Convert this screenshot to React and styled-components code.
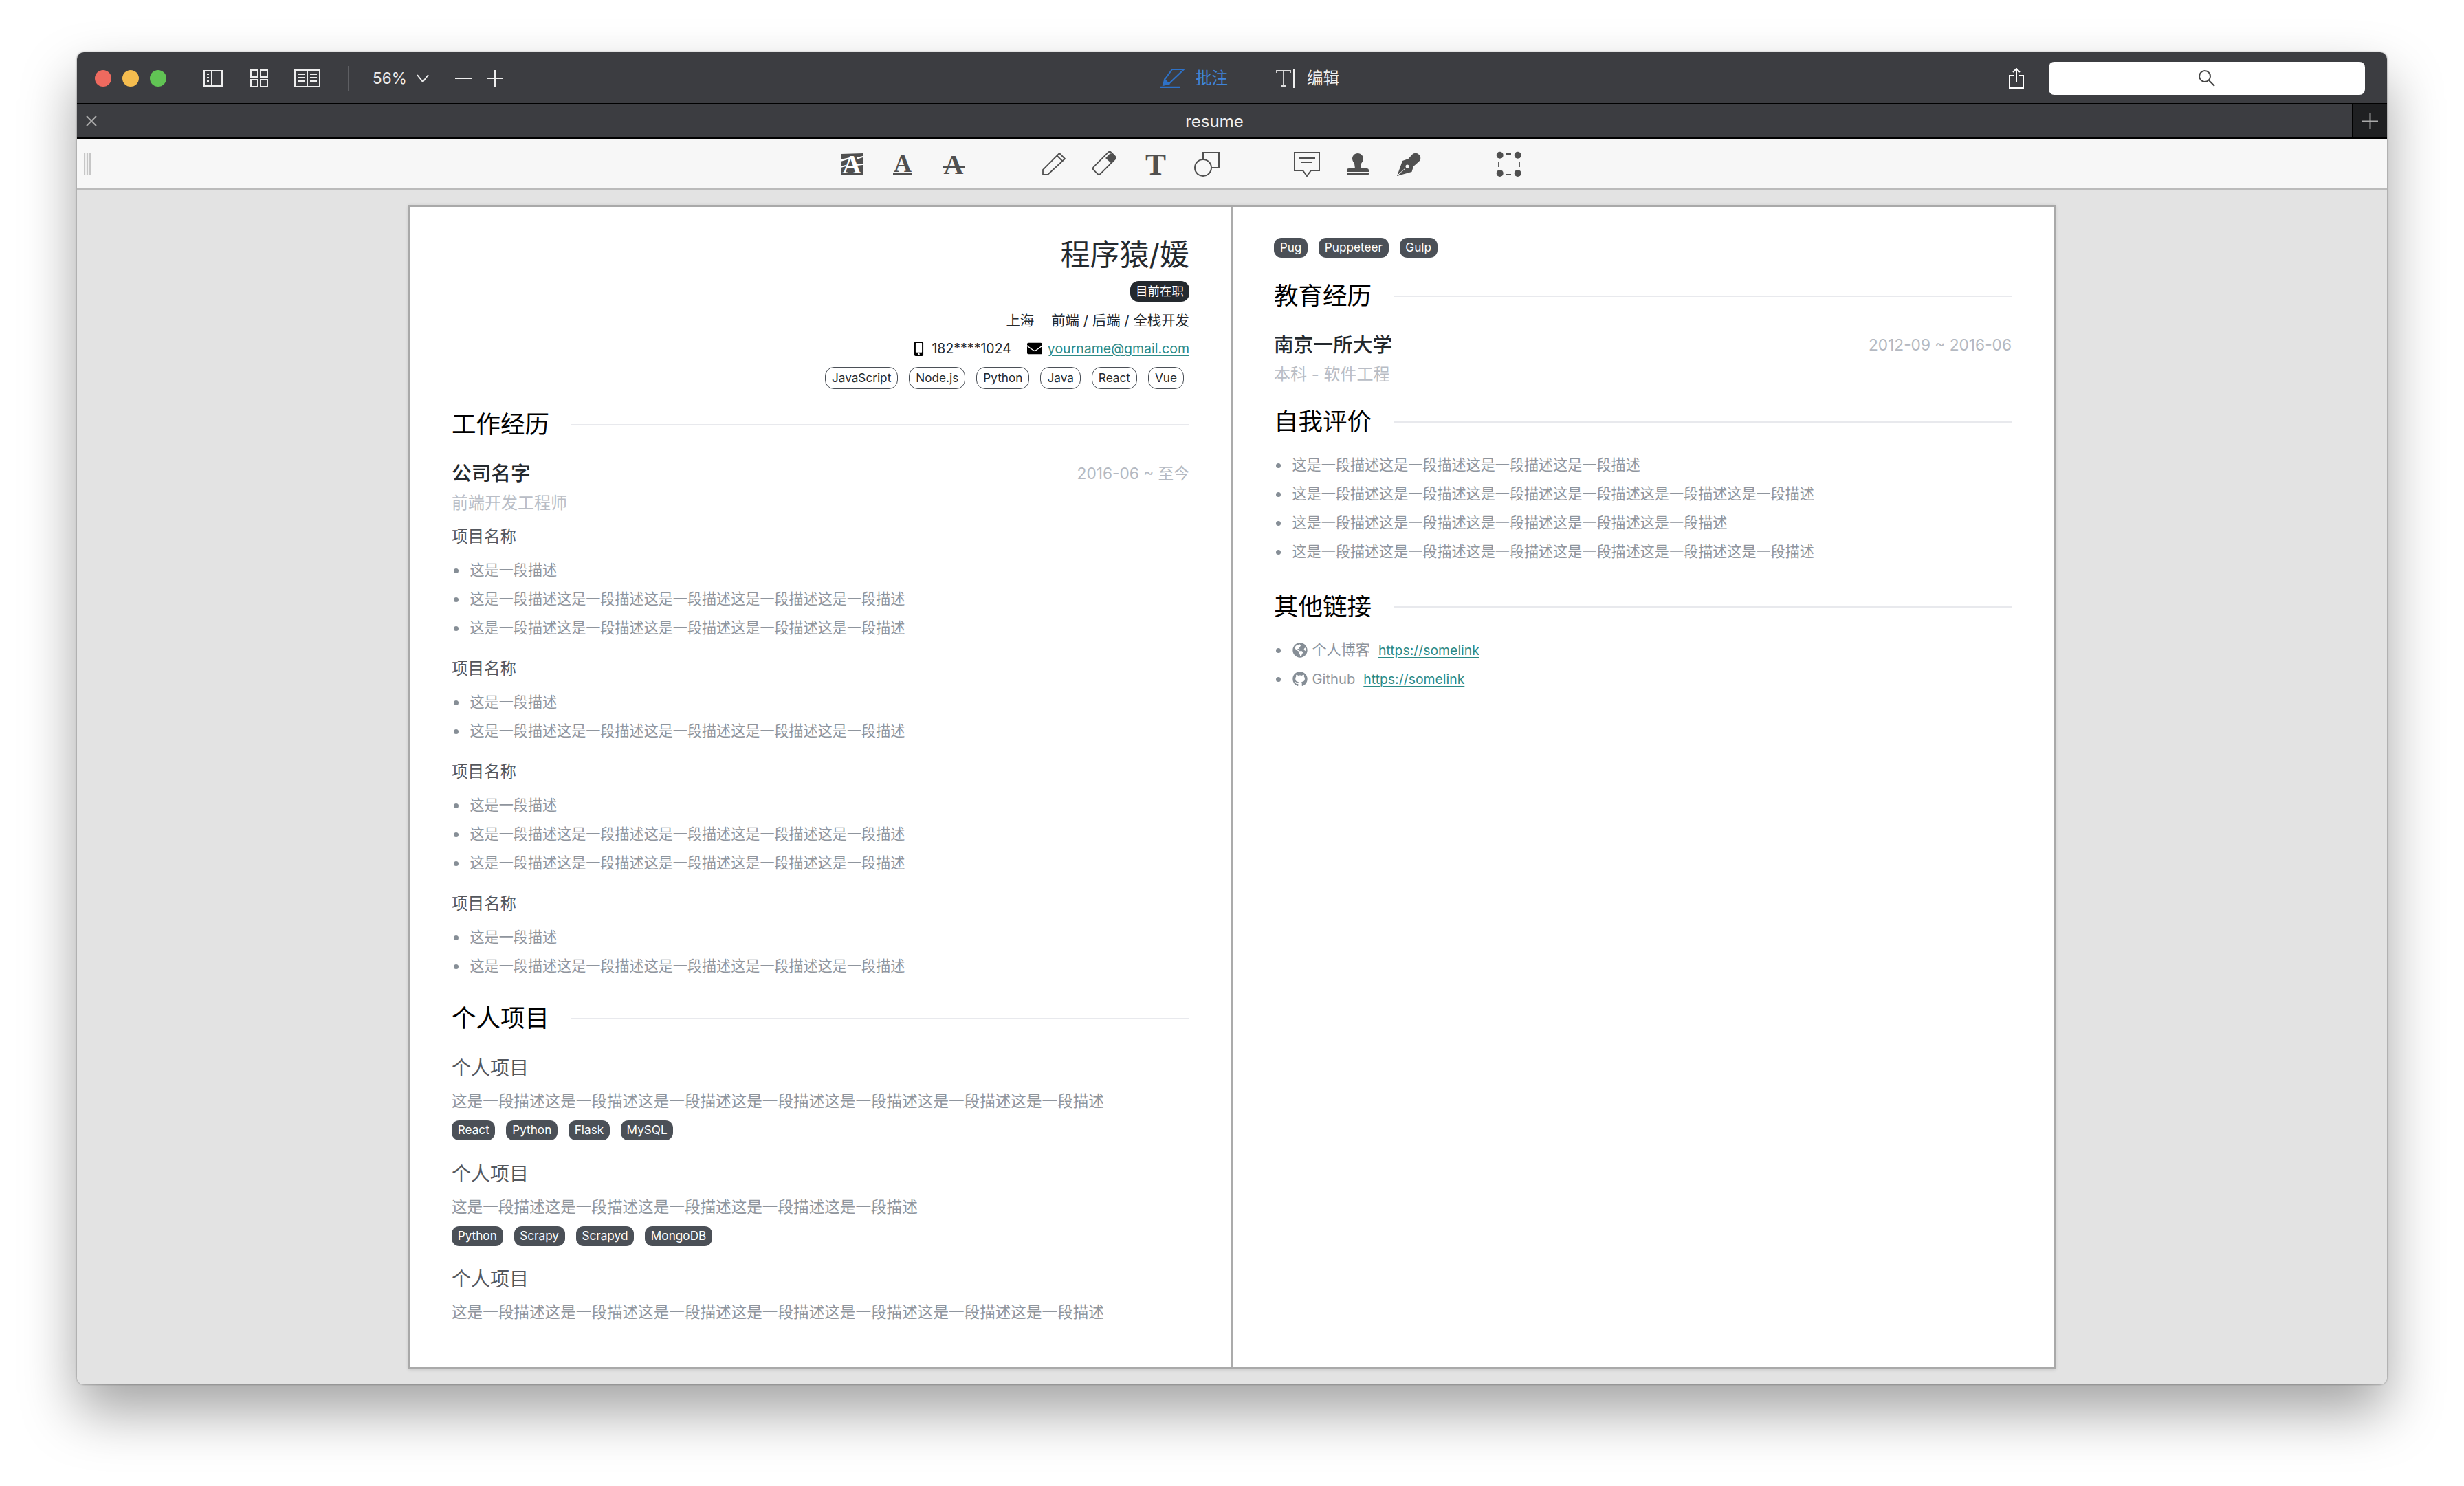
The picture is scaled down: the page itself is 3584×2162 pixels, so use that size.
import React from 'react';
import styled, { createGlobalStyle } from 'styled-components';
import { FaMobileAlt, FaEnvelope, FaGlobeAmericas, FaGithub } from 'react-icons/fa';

const GlobalStyle = createGlobalStyle`
  html, body { margin: 0; padding: 0; background: #fff; }
  body { font-family: Inter, "Noto Sans CJK SC", sans-serif; }
  * { box-sizing: border-box; }
`;

const Stage = styled.div`
  width: 3584px;
  height: 2162px;
  padding: 76px 112px 148px;
  overflow: hidden;
`;

const Window = styled.div`
  height: 1938px;
  border-radius: 10px;
  overflow: hidden;
  display: flex;
  flex-direction: column;
  background: #e3e3e3;
`;

const WindowShadow = styled.div`
  border-radius: 10px;
  box-shadow: 0 40px 80px rgba(0, 0, 0, 0.36), 0 0 3px rgba(0, 0, 0, 0.45);
`;

const TitleBar = styled.div`
  height: 76px;
  flex: none;
  display: flex;
  align-items: center;
  padding-top: 2px;
  background: #3c3d41;
  border-bottom: 2px solid #000;
  color: #eee;
`;

const LeftTools = styled.div`
  width: 1576px;
  flex: none;
  display: flex;
  align-items: center;
  padding-left: 26px;
`;

const Lights = styled.div`
  display: flex;
  gap: 16px;
  margin-right: 54px;
`;

const Light = styled.span`
  width: 24px;
  height: 24px;
  border-radius: 50%;
  background: ${(p) => p.$color};
`;

const BarIcon = styled.svg`
  display: block;
  flex: none;
  margin-left: ${(p) => p.$ml || 0}px;
`;

const BarDivider = styled.span`
  width: 2px;
  height: 36px;
  margin-left: 40px;
  background: #5e5f63;
`;

const Zoom = styled.span`
  margin-left: 34px;
  font-size: 22.5px;
  line-height: 30px;
`;

const ModeLabel = styled.span`
  margin: 0 ${(p) => p.$mr}px 0 ${(p) => p.$ml}px;
  font-size: 23.5px;
  line-height: 30px;
  color: ${(p) => p.$color};
`;

const Spacer = styled.div`
  flex: 1;
`;

const SearchBox = styled.div`
  width: 460px;
  height: 48px;
  margin: 0 32px 0 36px;
  border-radius: 8px;
  background: #fff;
  display: flex;
  align-items: center;
  justify-content: center;
`;

const TabBar = styled.div`
  height: 50px;
  flex: none;
  display: flex;
  align-items: stretch;
  background: #3c3d41;
  border-bottom: 2px solid #000;
`;

const TabClose = styled.div`
  width: 50px;
  display: flex;
  align-items: center;
  justify-content: center;
  padding-right: 8px;
`;

const TabTitle = styled.div`
  flex: 1;
  padding-right: 50px;
  text-align: center;
  font-size: 24px;
  line-height: 50px;
  color: #eee;
`;

const TabAdd = styled.div`
  width: 51px;
  display: flex;
  align-items: center;
  justify-content: center;
  background: #1f2022;
  border-left: 2px solid #000;
`;

const ToolBar = styled.div`
  height: 74px;
  flex: none;
  display: flex;
  align-items: center;
  padding-left: 10px;
  background: #f7f7f7;
  border-bottom: 2px solid #bbb;
`;

const Grip = styled.div`
  width: 10px;
  height: 32px;
  margin-right: 1070px;
  background: repeating-linear-gradient(90deg, #c6c6c6 0 2px, #f0f0f0 2px 4px);
`;

const ToolCell = styled.div`
  width: 74px;
  height: 40px;
  flex: none;
  display: flex;
  align-items: center;
  justify-content: center;
`;

const ToolGap = styled.div`
  width: 72px;
  flex: none;
`;

const ToolSvg = styled.svg`
  display: block;
  overflow: visible;
`;

const Viewer = styled.div`
  flex: 1;
  padding: 22px 0 22px 482px;
`;

const Sheet = styled.div`
  width: 2396px;
  height: 1694px;
  display: flex;
  background: #fff;
  border: 3px solid #a9a9a9;
  box-shadow: 0 1px 5px rgba(0, 0, 0, 0.12);
`;

const LeftPage = styled.div`
  width: 1194px;
  flex: none;
  padding: 39px 61px 0 60px;
`;

const RightPage = styled.div`
  flex: 1;
  padding: 45px 61px 0 60px;
  border-left: 2px solid #ababab;
`;

const Header = styled.header`
  display: flex;
  flex-direction: column;
  align-items: flex-end;
`;

const Name = styled.h1`
  margin: 0;
  font-size: 43px;
  font-weight: 400;
  line-height: 60px;
  color: #24292e;
`;

const StatusBadge = styled.span`
  margin-top: 9px;
  height: 30px;
  padding: 0 8px;
  border-radius: 12px;
  background: #24292e;
  color: #fff;
  font-size: 17.5px;
  line-height: 29px;
`;

const MetaLine = styled.div`
  display: flex;
  align-items: center;
  margin-top: ${(p) => p.$mt}px;
  font-size: ${(p) => p.$size}px;
  line-height: 34px;
  color: #24292e;
`;

const MetaGap = styled.span`
  width: ${(p) => p.$w}px;
`;

const ContactIcon = styled.span`
  display: flex;
  margin-right: 8px;
  font-size: ${(p) => p.$size}px;
  color: #000;
`;

const Link = styled.a`
  color: #2b8a87;
  text-decoration: underline;
  text-underline-offset: 3px;
`;

const TagRow = styled.div`
  display: flex;
  justify-content: ${(p) => (p.$end ? 'flex-end' : 'flex-start')};
  gap: 16px;
  margin-top: ${(p) => p.$mt}px;
  padding-right: ${(p) => (p.$end ? 8 : 0)}px;
`;

const OutlineTag = styled.span`
  height: 32px;
  padding: 0 9px;
  border: 1.5px solid #4b5057;
  border-radius: 13px;
  color: #24292e;
  font-size: 17.2px;
  line-height: 29px;
`;

const SolidTag = styled.span`
  height: 29px;
  padding: 0 8.7px;
  border-radius: 11px;
  background: #4b5057;
  color: #fff;
  font-size: 17.2px;
  line-height: 28px;
`;

const SectionTitle = styled.h2`
  display: flex;
  align-items: center;
  gap: 32px;
  margin: ${(p) => p.$mt}px 0 0;
  font-size: 35.5px;
  font-weight: 400;
  line-height: 50px;
  color: #000;
  &::after {
    content: '';
    flex: 1;
    height: 2px;
    background: #e8e9ed;
  }
`;

const EntryHead = styled.div`
  display: flex;
  justify-content: space-between;
  align-items: center;
  margin-top: 26px;
`;

const EntryName = styled.div`
  font-size: 28.7px;
  font-weight: 500;
  line-height: 40px;
  color: #24292e;
`;

const EntryDate = styled.div`
  font-size: 22.7px;
  line-height: 40px;
  color: #b4b9c1;
`;

const EntryRole = styled.div`
  margin-top: 5px;
  font-size: 24px;
  line-height: 36px;
  color: #b9bdc5;
`;

const ProjectName = styled.div`
  margin-top: ${(p) => p.$mt}px;
  font-size: 23.5px;
  line-height: 36px;
  color: #53575e;
`;

const List = styled.ul`
  margin: ${(p) => p.$mt}px 0 0;
  padding: 0;
  list-style: none;
`;

const Item = styled.li`
  display: flex;
  align-items: center;
  padding-left: 3px;
  font-size: 21.1px;
  line-height: 42px;
  color: #8f959d;
  &::before {
    content: '';
    width: 7px;
    height: 7px;
    margin-right: 16.5px;
    border-radius: 50%;
    background: #868e96;
  }
`;

const ItemIcon = styled.span`
  display: flex;
  margin-right: 7px;
  font-size: 22px;
  color: #868e96;
`;

const LatinLabel = styled.span`
  font-size: 20.2px;
`;

const ItemLink = styled(Link)`
  margin-left: 12px;
  font-size: 19.4px;
`;

const SubTitle = styled.div`
  margin-top: ${(p) => p.$mt}px;
  font-size: 28px;
  line-height: 40px;
  color: #53575e;
`;

const Description = styled.p`
  margin: 10px 0 0;
  font-size: 22.6px;
  line-height: 36px;
  color: #8f959d;
`;

const strokeIcon = { fill: 'none', stroke: 'currentColor' };

function SidebarIcon() {
  return (
    <BarIcon width="28" height="24" viewBox="0 0 28 24" {...strokeIcon} strokeWidth="2">
      <rect x="1" y="1" width="26" height="22" />
      <path d="M12 1v22M5 6h3M5 11h3M5 16h3" />
    </BarIcon>
  );
}

function GridIcon() {
  return (
    <BarIcon $ml={40} width="26" height="26" viewBox="0 0 26 26" {...strokeIcon} strokeWidth="2">
      <rect x="1" y="1" width="10" height="10" />
      <rect x="15" y="1" width="10" height="10" />
      <rect x="1" y="15" width="10" height="10" />
      <rect x="15" y="15" width="10" height="10" />
    </BarIcon>
  );
}

function ReaderIcon() {
  return (
    <BarIcon $ml={38} width="38" height="26" viewBox="0 0 38 26" {...strokeIcon} strokeWidth="2">
      <rect x="1" y="1" width="36" height="24" />
      <path d="M19 1v24M5 7h10M5 12h10M5 17h10M23 7h10M23 12h10M23 17h10" />
    </BarIcon>
  );
}

function Chevron() {
  return (
    <BarIcon $ml={14} width="18" height="12" viewBox="0 0 18 12" {...strokeIcon} strokeWidth="2">
      <path d="M1 1l8 10 8-10" />
    </BarIcon>
  );
}

function Minus() {
  return (
    <BarIcon $ml={38} width="24" height="4" viewBox="0 0 24 4" fill="#eee">
      <rect y="1" width="24" height="2" />
    </BarIcon>
  );
}

function Plus({ ml = 0, size = 24, color = '#eee' }) {
  return (
    <BarIcon $ml={ml} width={size} height={size} viewBox="0 0 24 24" stroke={color} strokeWidth="2" fill="none">
      <path d="M12 0v24M0 12h24" />
    </BarIcon>
  );
}

function MarkupIcon() {
  return (
    <BarIcon width="36" height="28" viewBox="0 0 36 28" fill="none" stroke="#2e72c8" strokeWidth="2">
      <path d="M17 1h17L12 22l-6-6z" />
      <path d="M6 16l-2 8 8-2z" fill="#2e72c8" />
      <path d="M0 27h28" strokeWidth="2.5" />
    </BarIcon>
  );
}

function EditIcon() {
  return (
    <BarIcon width="27" height="28" viewBox="0 0 27 28" stroke="#ddd" fill="none" strokeWidth="1.8">
      <path d="M1 6V3h20v3M11 3v22M7 25h8" />
      <path d="M26 0v28" strokeWidth="2" stroke="#eee" />
    </BarIcon>
  );
}

function ShareIcon() {
  return (
    <BarIcon width="22" height="30" viewBox="0 0 22 30" stroke="#fff" fill="none" strokeWidth="2">
      <path d="M7 11H1v18h20V11h-6M11 21V1M6 6l5-5 5 5" />
    </BarIcon>
  );
}

function SearchIcon() {
  return (
    <BarIcon width="26" height="24" viewBox="0 0 26 24" stroke="#444" fill="none" strokeWidth="2">
      <circle cx="10" cy="9" r="8" />
      <path d="M16 15l8 8" />
    </BarIcon>
  );
}

function CloseIcon() {
  return (
    <BarIcon width="16" height="16" viewBox="0 0 16 16" stroke="#a8a8a8" fill="none" strokeWidth="2">
      <path d="M1 1l14 14M15 1L1 15" />
    </BarIcon>
  );
}

const iconGrey = '#505050';

function Glyph({ children, y, size, color = iconGrey }) {
  return (
    <text x="20" y={y} textAnchor="middle" fontFamily="'Liberation Serif', serif" fontWeight="700" fontSize={size} fill={color}>
      {children}
    </text>
  );
}

const toolIcons = [
  <>
    <path d="M4 6l32-1v32H4z" fill={iconGrey} />
    <Glyph y={34} size={38} color="#fff">A</Glyph>
    <path d="M4 14l13-3v2L4 17zM27 11l9-2v2l-9 3zM4 24l7-2v2l-7 2zM27 21l9-1v2l-9 1z" fill="#fff" />
  </>,
  <>
    <Glyph y={32} size={36}>A</Glyph>
    <rect x="6" y="34" width="28" height="2" fill={iconGrey} />
  </>,
  <>
    <Glyph y={35} size={40}>A</Glyph>
    <rect x="4" y="24" width="32" height="2" fill={iconGrey} />
  </>,
  <path d="M4 36v-7L28 5l8 8-25 23zM25 9l7 7" fill="none" stroke={iconGrey} strokeWidth="1.8" strokeLinejoin="round" />,
  <>
    <rect x="2" y="12" width="36" height="14" rx="3" transform="rotate(-45 20 20)" fill="none" stroke={iconGrey} strokeWidth="1.8" />
    <path d="M21 12l6-6c1-1 3-1 4 0l4 4c1 1 1 3 0 4l-5 6z" fill={iconGrey} />
  </>,
  <Glyph y={36} size={45}>T</Glyph>,
  <>
    <path d="M15 14V4h23v22H27" fill="none" stroke={iconGrey} strokeWidth="2" />
    <circle cx="15" cy="26" r="12" fill="none" stroke={iconGrey} strokeWidth="2" />
  </>,
  <>
    <path d="M2 4h36v26H26l-6 8-6-8H2z" fill="none" stroke={iconGrey} strokeWidth="2" />
    <path d="M8 12h24M12 18h16" stroke={iconGrey} strokeWidth="2" />
  </>,
  <>
    <path d="M20 5c5 0 8 4 8 8 0 3-2 5-3 7l-1 7h9c2 0 3 1 3 3v2H4v-2c0-2 1-3 3-3h9l-1-7c-1-2-3-4-3-7 0-4 3-8 8-8z" fill={iconGrey} />
    <path d="M4 34h32v1c0 1-1 2-2 2H6c-1 0-2-1-2-2z" fill={iconGrey} />
  </>,
  <>
    <path d="M3 38l8-22 8.5-3L25 7c3-3 7-3 10 0s3 7 0 10l-8 7-2.5 8z" fill={iconGrey} />
    <path d="M5 36l11-10" stroke="#f7f7f7" strokeWidth="1" />
    <circle cx="18" cy="24" r="2.5" fill="#f7f7f7" />
  </>,
  <>
    <circle cx="6.7" cy="7.7" r="5" fill={iconGrey} />
    <circle cx="32.7" cy="7.7" r="5" fill={iconGrey} />
    <circle cx="6.7" cy="34" r="5" fill={iconGrey} />
    <circle cx="32.7" cy="34" r="5" fill={iconGrey} />
    <path d="M16 6h7M16 36h7M5 17v8M35 17v8" stroke={iconGrey} strokeWidth="1.8" />
  </>,
];

// null 的位置是工具栏分组之间的空隙
const toolLayout = [0, 1, 2, null, 3, 4, 5, 6, null, 7, 8, 9, null, 10];

const desc = '这是一段描述';
const repeat = (n) => desc.repeat(n);

const projects = [
  { items: [1, 5, 5] },
  { items: [1, 5] },
  { items: [1, 5, 5] },
  { items: [1, 5] },
];

const personal = [
  { text: repeat(7), tags: ['React', 'Python', 'Flask', 'MySQL'] },
  { text: repeat(5), tags: ['Python', 'Scrapy', 'Scrapyd', 'MongoDB'] },
  { text: repeat(7), tags: [] },
];

function SheetLeft() {
  return (
    <LeftPage>
      <Header>
        <Name>程序猿/媛</Name>
        <StatusBadge>目前在职</StatusBadge>
        <MetaLine $mt={11} $size={20.4}>
          上海
          <MetaGap $w={25} />
          前端 / 后端 / 全栈开发
        </MetaLine>
        <MetaLine $mt={6} $size={19.5}>
          <ContactIcon $size={21}><FaMobileAlt /></ContactIcon>
          182****1024
          <MetaGap $w={23} />
          <ContactIcon $size={22}><FaEnvelope /></ContactIcon>
          <Link>yourname@gmail.com</Link>
        </MetaLine>
      </Header>
      <TagRow $end $mt={10}>
        {['JavaScript', 'Node.js', 'Python', 'Java', 'React', 'Vue'].map((t) => (
          <OutlineTag key={t}>{t}</OutlineTag>
        ))}
      </TagRow>

      <SectionTitle $mt={27}>工作经历</SectionTitle>
      <EntryHead>
        <EntryName>公司名字</EntryName>
        <EntryDate>2016-06 ~ 至今</EntryDate>
      </EntryHead>
      <EntryRole>前端开发工程师</EntryRole>
      {projects.map((project, i) => (
        <React.Fragment key={i}>
          <ProjectName $mt={i === 0 ? 13 : 20}>项目名称</ProjectName>
          <List $mt={10}>
            {project.items.map((n, j) => (
              <Item key={j}>{repeat(n)}</Item>
            ))}
          </List>
        </React.Fragment>
      ))}

      <SectionTitle $mt={30}>个人项目</SectionTitle>
      {personal.map((p, i) => (
        <React.Fragment key={i}>
          <SubTitle $mt={i === 0 ? 27 : 28.5}>个人项目</SubTitle>
          <Description>{p.text}</Description>
          {p.tags.length > 0 && (
            <TagRow $mt={10}>
              {p.tags.map((t) => (
                <SolidTag key={t}>{t}</SolidTag>
              ))}
            </TagRow>
          )}
        </React.Fragment>
      ))}
    </LeftPage>
  );
}

function SheetRight() {
  return (
    <RightPage>
      <TagRow $mt={0}>
        {['Pug', 'Puppeteer', 'Gulp'].map((t) => (
          <SolidTag key={t}>{t}</SolidTag>
        ))}
      </TagRow>

      <SectionTitle $mt={31}>教育经历</SectionTitle>
      <EntryHead>
        <EntryName>南京一所大学</EntryName>
        <EntryDate>2012-09 ~ 2016-06</EntryDate>
      </EntryHead>
      <EntryRole>本科 - 软件工程</EntryRole>

      <SectionTitle $mt={26}>自我评价</SectionTitle>
      <List $mt={17}>
        {[4, 6, 5, 6].map((n, i) => (
          <Item key={i}>{repeat(n)}</Item>
        ))}
      </List>

      <SectionTitle $mt={34}>其他链接</SectionTitle>
      <List $mt={17}>
        <Item>
          <ItemIcon><FaGlobeAmericas /></ItemIcon>
          个人博客
          <ItemLink>https://somelink</ItemLink>
        </Item>
        <Item>
          <ItemIcon><FaGithub /></ItemIcon>
          <LatinLabel>Github</LatinLabel>
          <ItemLink>https://somelink</ItemLink>
        </Item>
      </List>
    </RightPage>
  );
}

export default function App() {
  return (
    <Stage>
      <GlobalStyle />
      <WindowShadow>
        <Window>
          <TitleBar>
            <LeftTools>
              <Lights>
                <Light $color="#ee6a5f" />
                <Light $color="#f5bd4f" />
                <Light $color="#61c454" />
              </Lights>
              <SidebarIcon />
              <GridIcon />
              <ReaderIcon />
              <BarDivider />
              <Zoom>56%</Zoom>
              <Chevron />
              <Minus />
              <Plus ml={22} />
            </LeftTools>
            <MarkupIcon />
            <ModeLabel $color="#3f84d8" $ml={15} $mr={70}>批注</ModeLabel>
            <EditIcon />
            <ModeLabel $color="#eee" $ml={18} $mr={0}>编辑</ModeLabel>
            <Spacer />
            <ShareIcon />
            <SearchBox>
              <SearchIcon />
            </SearchBox>
          </TitleBar>
          <TabBar>
            <TabClose><CloseIcon /></TabClose>
            <TabTitle>resume</TabTitle>
            <TabAdd><Plus size={23} color="#aaa" /></TabAdd>
          </TabBar>
          <ToolBar>
            <Grip />
            {toolLayout.map((slot, i) =>
              slot === null ? (
                <ToolGap key={i} />
              ) : (
                <ToolCell key={i}>
                  <ToolSvg width="40" height="40" viewBox="0 0 40 40">{toolIcons[slot]}</ToolSvg>
                </ToolCell>
              )
            )}
          </ToolBar>
          <Viewer>
            <Sheet>
              <SheetLeft />
              <SheetRight />
            </Sheet>
          </Viewer>
        </Window>
      </WindowShadow>
    </Stage>
  );
}
